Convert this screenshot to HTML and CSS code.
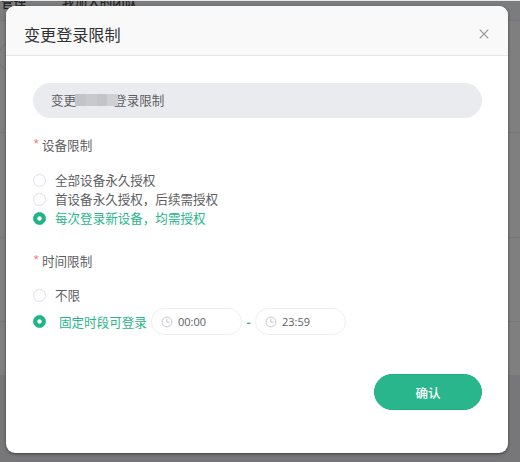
FILE: index.html
```html
<!DOCTYPE html>
<html lang="zh-CN">
<head>
<meta charset="utf-8">
<title>变更登录限制</title>
<link rel="stylesheet" href="styles.css">
</head>
<body>
<div class="page" aria-hidden="true">
  <div class="page-top"><span class="tab">管理</span><span class="tab tab-team">我加入的团队</span></div>
  <div class="page-search"><span class="search-pill"></span></div>
  <div class="page-row row-a"></div>
  <div class="page-row row-b"></div>
  <div class="page-row row-c"></div>
</div>
<main class="dialog">
  <header class="dialog-header">
    <h1 class="dialog-title">变更登录限制</h1>
    <svg class="close" viewBox="0 0 10 10"><path d="M.7.7l8.6 8.6M9.3.7L.7 9.3"/></svg>
  </header>
  <section class="dialog-body">
    <div class="notice"><span>变更</span><span class="mask"><i></i><i></i><i></i><i></i></span><span>登录限制</span></div>
    <h2 class="label"><span class="star">*</span>设备限制</h2>
    <div class="options">
      <label class="option"><span class="radio"></span>全部设备永久授权</label>
      <label class="option"><span class="radio"></span>首设备永久授权，后续需授权</label>
      <label class="option checked"><span class="radio"></span>每次登录新设备，均需授权</label>
    </div>
    <h2 class="label label-time"><span class="star">*</span>时间限制</h2>
    <label class="option option-any"><span class="radio"></span>不限</label>
    <div class="option checked option-range"><span class="radio"></span><span class="range-text">固定时段可登录</span>
      <span class="time"><svg class="clock" viewBox="0 0 12 12"><circle cx="6" cy="6" r="4.9"/><path d="M5.8 3v3.2h2.9"/></svg>00:00</span>
      <span class="dash">-</span>
      <span class="time"><svg class="clock" viewBox="0 0 12 12"><circle cx="6" cy="6" r="4.9"/><path d="M5.8 3v3.2h2.9"/></svg>23:59</span>
    </div>
    <button class="confirm">确认</button>
  </section>
</main>
</body>
</html>
```
FILE: styles.css
```css
* { box-sizing: border-box; }
body {
  margin: 0;
  width: 520px;
  height: 462px;
  overflow: hidden;
  background: #777779;
  color: #5c5e62;
  font: 12.55px/19px "Noto Sans CJK SC", sans-serif;
}
.page {
  position: absolute;
  inset: 0;
  border-top: 1px solid #e8e8e8;
  overflow: hidden;
  background: #777779;
}
.page-top { display: flex; height: 20px; background: #7b7c7e; border-bottom: 1px solid #757678; overflow: hidden; }
.tab { margin: -9px 0 0 1px; color: #222; font-weight: 500; }
.tab-team { margin-left: 36px; }
.page-search { height: 112px; padding-top: 20px; background: #7f7f7f; border-bottom: 1px solid #777; }
.search-pill { display: block; width: 60px; height: 32px; margin-left: -2px; border: 1px solid #747474; border-radius: 16px; }
.page-row { background: #7f7f7f; border-bottom: 1px solid #777; }
.row-a { height: 105px; }
.row-b { height: 84px; }
.row-c { height: 53px; border: 0; }
.dialog {
  position: relative;
  width: 502px;
  height: 447px;
  margin: 6px 0 0 6px;
  overflow: hidden;
  border-radius: 9px;
  background: #fff;
  box-shadow: 0 1px 3px rgba(0, 0, 0, .5);
}
.dialog-header {
  display: flex;
  align-items: center;
  justify-content: space-between;
  height: 50px;
  padding: 7px 19px 0 18px;
  border-bottom: 1px solid #e4e6e9;
  background: #f9f9f9;
}
.dialog-title { margin: 0; color: #303133; font-size: 16.1px; font-weight: 400; line-height: 24px; }
.close { width: 10px; height: 10px; fill: none; stroke: #909399; stroke-width: 1.2; }
.dialog-body { display: flex; flex-direction: column; padding: 27px 26px 0 27px; }
.notice {
  display: flex;
  align-items: center;
  height: 35px;
  padding: 0 18px 2px;
  border-radius: 18px;
  background: #eaebef;
}
.mask { display: flex; width: 43px; height: 12px; margin: 0 -4px 0 -1px; z-index: 1; }
.mask i { flex: 1; background: #c3c4c7; }
.mask i:nth-child(2) { background: #c8c9cc; }
.mask i:nth-child(4) { background: #cfd0d3; }
.label { display: flex; margin: 17px 0 0; font-size: 12.55px; font-weight: 400; line-height: 19px; }
.star { width: 9px; color: #f78989; font-size: 14px; }
.options { margin-top: 16px; }
.option { display: flex; align-items: center; height: 19px; }
.radio { width: 13px; height: 13px; margin: 2px 9px 0 0; border: 1px solid #dcdfe6; border-radius: 50%; background: #fff; flex: none; }
.checked { color: #29b68c; }
.checked .radio { border-color: #20b486; background: radial-gradient(circle, #fff 1.8px, #20b486 2.5px); }
.label-time { margin-top: 24px; }
.option-any { margin-top: 15px; }
.option-range { height: 27px; margin-top: 4px; }
.option-range .radio { margin-top: 0; }
.range-text { width: 93px; margin: -1px -1px 0 4px; white-space: nowrap; }
.time {
  display: flex;
  align-items: center;
  width: 91px;
  height: 27px;
  padding-left: 9px;
  border: 1px solid #eceef1;
  border-radius: 14px;
  color: #5c5e62;
  font: 11px/16px "Open Sans", sans-serif;
}
.clock { width: 12px; height: 12px; margin-right: 5px; fill: none; stroke: #c5c8ce; }
.dash { width: 13px; text-align: center; font-weight: 700; }
.confirm {
  align-self: flex-end;
  width: 108px;
  height: 36px;
  margin-top: 39px;
  padding: 0;
  border: 1px solid #1fb183;
  border-radius: 18px;
  background: #29b68c;
  color: #fff;
  font: 500 12.5px/19px "Noto Sans CJK SC", sans-serif;
}
```
